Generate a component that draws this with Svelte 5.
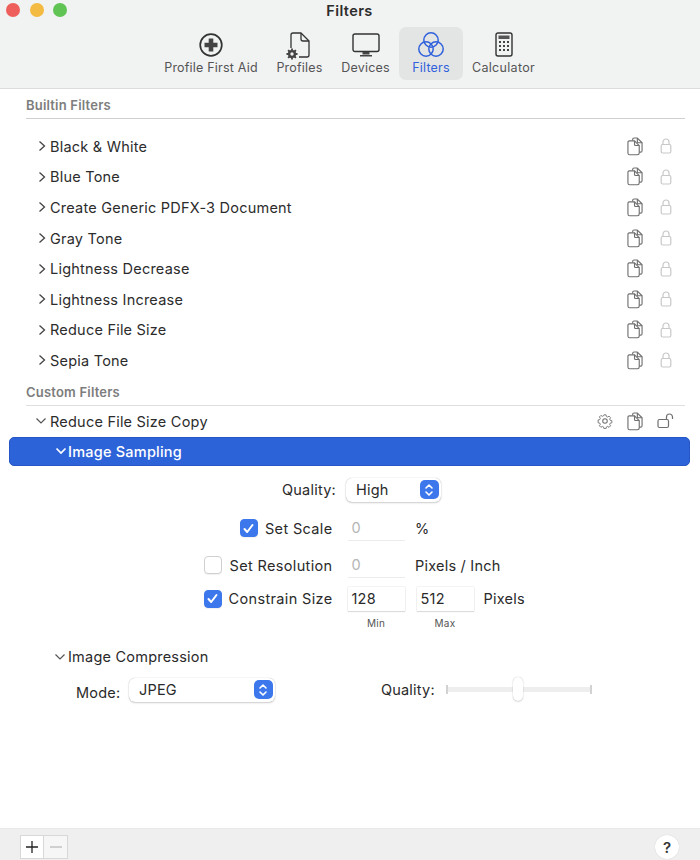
<script>
  const builtin = ['Black & White','Blue Tone','Create Generic PDFX-3 Document','Gray Tone','Lightness Decrease','Lightness Increase','Reduce File Size','Sepia Tone'];
</script>

{#snippet chevronRight()}
  <svg class="chev" width="10" height="12" viewBox="0 0 10 12"><path d="M2.500 1.500 7.500 6 2.500 10.500" fill="none" stroke="#444" stroke-width="1.300"/></svg>
{/snippet}
{#snippet chevronDown(color, w)}
  <svg class="chev" width="12" height="10" viewBox="0 0 12 10"><path d="M1.500 2.500 6 7 10.500 2.500" fill="none" stroke={color} stroke-width={w}/></svg>
{/snippet}
{#snippet copyIcon()}
  <svg width="16" height="19" viewBox="0 0 17 20" fill="none" stroke="#6f6f6f" stroke-width="1.200" stroke-linejoin="round">
    <path d="M6 3.500V2.500a1.500 1.500 0 0 1 1.500-1.500H11l5 5v8.500a1.500 1.500 0 0 1-1.500 1.500H13"/>
    <path d="M11 1v4a1 1 0 0 0 1 1h4" />
    <path d="M2.500 4H8l5 5v8a1.800 1.800 0 0 1-1.800 1.800H2.800A1.800 1.800 0 0 1 1 17V5.500A1.500 1.500 0 0 1 2.500 4Z" fill="#fff"/>
    <path d="M8 4v4a1 1 0 0 0 1 1h4"/>
  </svg>
{/snippet}
{#snippet lockIcon()}
  <svg width="12" height="16" viewBox="0 0 12 16" fill="none" stroke="#c8c8c8" stroke-width="1.200">
    <rect x="1.200" y="6.500" width="9.600" height="8.500" rx="1.500"/>
    <path d="M3 6.500V4a3 3 0 0 1 6 0v2.500"/>
  </svg>
{/snippet}
{#snippet stepper()}
  <span class="stepper">
    <svg width="10" height="14" viewBox="0 0 10 14" fill="none" stroke="#fff" stroke-width="1.600" stroke-linecap="round" stroke-linejoin="round"><path d="M2 5 5 2l3 3M2 9l3 3 3-3"/></svg>
  </span>
{/snippet}
{#snippet check(on)}
  <span class="box" class:on>
    {#if on}<svg width="13" height="13" viewBox="0 0 13 13" fill="none" stroke="#fff" stroke-width="2" stroke-linecap="round" stroke-linejoin="round"><path d="M2.500 7 5.200 10 10.500 3"/></svg>{/if}
  </span>
{/snippet}

<div class="win">
  <header class="toolbar">
    <div class="titlebar">
      <div class="lights"><i class="red"></i><i class="yellow"></i><i class="green"></i></div>
      <div class="title">Filters</div>
    </div>
    <nav class="tools">
      <div class="tool t1">
        <svg width="26" height="26" viewBox="0 0 26 26"><circle cx="13" cy="13" r="10.800" fill="none" stroke="#333" stroke-width="1.700"/><path d="M13 6.500v13M6.500 13h13" stroke="#444" stroke-width="4.600"/></svg>
        <span>Profile First Aid</span>
      </div>
      <div class="tool t2">
        <svg width="26" height="26" viewBox="0 0 26 26" fill="none" stroke="#333" stroke-width="1.300" stroke-linejoin="round">
          <path d="M4 16V3a2 2 0 0 1 2-2h8l8 8v14a2 2 0 0 1-2 2h-8"/>
          <path d="M14 1v6a2 2 0 0 0 2 2h6"/>
          <circle cx="5" cy="22" r="2.900" stroke="#444" stroke-width="2.400"/>
          <path d="M5 16.500v2M5 25.500v2M-.5 22h2M8.500 22h2M1.100 18.100l1.400 1.400M7.500 24.500l1.400 1.400M1.100 25.900l1.400-1.400M7.500 19.500l1.400-1.400" stroke="#444" stroke-width="1.800"/>
        </svg>
        <span>Profiles</span>
      </div>
      <div class="tool t3">
        <svg width="28" height="26" viewBox="0 0 28 26" fill="none">
          <rect x="1" y="2" width="26" height="17.500" rx="2" stroke="#333" stroke-width="1.400"/>
          <path d="M10.500 20v2.500h7V20Z M8 23h12v1.500H8Z" fill="#444"/>
        </svg>
        <span>Devices</span>
      </div>
      <div class="tool t4 active">
        <svg width="26" height="26" viewBox="0 0 26 26" fill="none" stroke="#2f62dc" stroke-width="1.500">
          <circle cx="13" cy="8" r="7.200"/><circle cx="8" cy="17" r="7.200"/><circle cx="18" cy="17" r="7.200"/>
        </svg>
        <span>Filters</span>
      </div>
      <div class="tool t5">
        <svg width="26" height="26" viewBox="0 0 26 26" fill="none">
          <rect x="5" y="1" width="16" height="23" rx="2" stroke="#333" stroke-width="1.400"/>
          <rect x="7.500" y="3.500" width="11" height="3.500" fill="#555"/>
          <path d="M8 10h2M12 10h2M16 10h2M8 14h2M12 14h2M16 14h2M8 18h2M12 18h2M16 18h2" stroke="#444" stroke-width="2"/>
        </svg>
        <span>Calculator</span>
      </div>
    </nav>
  </header>

  <main class="content">
    <div class="section first">Builtin Filters</div>
    <ul class="list">
      {#each builtin as name}
        <li class="row">
          {@render chevronRight()}
          <span class="name">{name}</span>
          <span class="acts">{@render copyIcon()}{@render lockIcon()}</span>
        </li>
      {/each}
    </ul>

    <div class="section second">Custom Filters</div>
    <div class="row custom">
      {@render chevronDown('#555', 1.2)}
      <span class="name">Reduce File Size Copy</span>
      <span class="acts">
        <svg class="gear" width="16" height="16" viewBox="0 0 17 17" fill="none" stroke="#6f6f6f" stroke-width="1.100" stroke-linejoin="round">
          <path d="M7.200 1h2.600l.4 2 1.500.7 1.800-1.100 1.800 1.800-1.100 1.800.7 1.500 2 .4v2.600l-2 .4-.7 1.500 1.100 1.800-1.800 1.800-1.800-1.100-1.500.7-.4 2H7.200l-.4-2-1.500-.7-1.800 1.100-1.800-1.800 1.100-1.800-.7-1.500-2-.4V7.200l2-.4.7-1.500-1.100-1.800 1.800-1.800 1.800 1.100 1.500-.7Z" transform="translate(1.100 1.100) scale(.87)"/>
          <circle cx="8.500" cy="8.500" r="2.400"/>
        </svg>
        {@render copyIcon()}
        <svg class="unlock" width="17" height="16" viewBox="0 0 17 16" fill="none" stroke="#6f6f6f" stroke-width="1.200">
          <rect x="1" y="6.500" width="10.500" height="8" rx="1.500"/>
          <path d="M9.500 6.500V4a3 3 0 0 1 6 0v2"/>
        </svg>
      </span>
    </div>
    <div class="selected">
      {@render chevronDown('#fff', 1.7)}
      <span>Image Sampling</span>
    </div>

    <div class="quality"><label for="q">Quality:</label>
      <div id="q" class="popup high"><span>High</span>{@render stepper()}</div>
    </div>

    <div class="fields">
      <div class="flabel">{@render check(true)}<span>Set Scale</span></div>
      <div class="field off">0</div><div class="unit">%</div>

      <div class="flabel">{@render check(false)}<span>Set Resolution</span></div>
      <div class="field off">0</div><div class="unit">Pixels / Inch</div>

      <div class="flabel">{@render check(true)}<span>Constrain Size</span></div>
      <div class="pair">
        <div class="field">128<small>Min</small></div>
        <div class="field">512<small>Max</small></div>
        <div class="unit">Pixels</div>
      </div>
    </div>

    <div class="sub">{@render chevronDown('#555', 1.2)}<span>Image Compression</span></div>
    <div class="compress">
      <div class="mode"><span class="modelabel">Mode:</span>
        <div class="popup jpeg"><span>JPEG</span>{@render stepper()}</div>
      </div>
      <div class="qslider"><span>Quality:</span>
        <div class="slider"><i class="thumb"></i></div>
      </div>
    </div>
  </main>

  <footer class="bottom">
    <div class="pm"><span class="plus">
      <svg width="14" height="14" viewBox="0 0 14 14"><path d="M7 1v12M1 7h12" stroke="#222" stroke-width="1.300"/></svg></span><span class="minus">
      <svg width="14" height="14" viewBox="0 0 14 14"><path d="M1 7h12" stroke="#bbb" stroke-width="1.300"/></svg></span></div>
    <div class="help">?</div>
  </footer>
</div>

<style>
  :global(body) { margin: 0; background: #fff; }
  .win {
    width: 700px; height: 860px; display: flex; flex-direction: column;
    font-family: Inter, "Liberation Sans", sans-serif; color: #2a2a2a; font-size: 14.500px; letter-spacing: .22px;
    overflow: hidden; background: #fff;
  }
  .toolbar { height: 88px; background: #f1f2f2; border-bottom: 1px solid #dcdcdc; flex: none; }
  .titlebar { height: 27px; position: relative; display: flex; align-items: center; justify-content: center; }
  .title { font-weight: 600; font-size: 14.500px; letter-spacing: .4px; color: #2c2c2c; margin-top: -7px; margin-left: -1px; }
  .lights { position: absolute; left: 6px; top: 3px; display: flex; gap: 9.500px; }
  .lights i { width: 14px; height: 14px; border-radius: 50%; display: block; }
  .red { background: #ee5f5b; } .yellow { background: #f4bb43; } .green { background: #5fc454; }
  .tools { display: flex; justify-content: center; height: 53px; margin-left: -1px; }
  .tool { display: flex; flex-direction: column; align-items: center; padding-top: 5px; box-sizing: border-box; border-radius: 7px; color: #555; font-size: 12.500px; letter-spacing: .2px; white-space: nowrap; }
  .tool svg { overflow: visible; }
  .tool span { margin-top: 2px; line-height: 16px; }
  .t1 { width: 112px; } .t2 { width: 65px; } .t3 { width: 67px; } .t4 { width: 64px; } .t5 { width: 81px; }
  .t5 span { letter-spacing: .3px; }
  .active { background: #e3e4e4; color: #2f62dc; }

  .content { flex: 1; padding: 0 9px; position: relative; }
  .section { margin-left: 17px; margin-right: 6px; font-size: 13px; letter-spacing: .2px; font-weight: 600; color: #7d7d7d; height: 20px; line-height: 20px; border-bottom: 1px solid #dfdfdf; padding-bottom: 3px; box-sizing: content-box; }
  .first { margin-top: 6px; border-bottom-color: #cfcfcf; }
  .second { margin-top: 6px; }
  .list { list-style: none; margin: 12px 0 0; padding: 0; }
  .row { height: 30.600px; display: flex; align-items: center; padding-left: 28px; color: #2c2c2c; }
  .chev { flex: none; }
  .name { margin-left: 3px; }
  .acts { margin-left: auto; margin-right: 19.500px; display: flex; align-items: center; gap: 16.500px; }
  .custom { padding-left: 26px; height: 31px; }
  .custom .acts { margin-right: 17px; gap: 14px; }
  .selected { height: 29px; margin-right: 1px; background: #2d63d9; color: #fff; border-radius: 5px; display: flex; align-items: center; padding-left: 45px; font-weight: 500; border: 1px solid #2556c3; box-sizing: border-box; }
  .selected span { margin-left: 1px; }

  .quality { display: flex; align-items: center; margin-top: 10px; padding-left: 273px; height: 28px; }
  .quality label { margin-right: 10px; }
  .popup { background: #fff; border-radius: 6px; box-shadow: 0 0 1px rgba(0,0,0,.3), 0 1px 2px rgba(0,0,0,.18); display: flex; align-items: center; justify-content: space-between; height: 24px; padding: 0 2px 0 10px; box-sizing: border-box; }
  .high { width: 95px; }
  .jpeg { width: 146px; }
  .stepper { width: 19px; height: 19px; background: #3c78ec; border-radius: 5px; display: flex; align-items: center; justify-content: center; }

  .fields { display: grid; grid-template-columns: 329px 68px 1fr; grid-template-rows: 37px 37px 30px; margin-top: 6px; align-items: center; }
  .flabel { display: flex; align-items: center; justify-content: flex-end; gap: 7px; height: 25px; padding-right: 5.500px; letter-spacing: .35px; }
  .box { width: 16px; height: 16px; border-radius: 4px; border: 1px solid #d0d0d0; background: #fff; display: flex; align-items: center; justify-content: center; box-shadow: 0 1px 1px rgba(0,0,0,.06); }
  .box.on { background: #3c78ec; border-color: #3c78ec; }
  .field { width: 57px; height: 24px; line-height: 24px; padding-left: 4px; box-sizing: border-box; background: #fff; box-shadow: 0 0 1px rgba(0,0,0,.25), 0 1px 1px rgba(0,0,0,.1); position: relative; margin-left: 9.500px; }
  .field.off { color: #b5b5b5; box-shadow: 0 1px 0 #ececec; }
  .unit { margin-left: 9px; white-space: nowrap; }
  .pair { grid-column: 2 / 4; display: flex; align-items: center; }
  .pair .field + .field { margin-left: 12px; }
  .pair .unit { margin-left: 10px; }
  .field small { position: absolute; left: 0; right: 0; top: 29px; text-align: center; font-size: 10px; line-height: 14px; color: #555; }

  .sub { display: flex; align-items: center; margin-top: 31px; padding-left: 45px; height: 24px; gap: 2px; }
  .compress { display: flex; margin-top: 9px; align-items: center; }
  .mode { display: flex; align-items: center; gap: 8.500px; margin-left: 67px; }
  .modelabel { margin-top: 5px; }
  .qslider { display: flex; align-items: center; gap: 11px; margin-left: 106px; }
  .slider { width: 146px; height: 5px; background: #eeeeee; position: relative; }
  .slider::before, .slider::after { content: ""; position: absolute; top: -2px; width: 2px; height: 9px; background: #d2d2d2; }
  .slider::before { left: 0; }
  .slider::after { right: 0; }
  .thumb { position: absolute; left: 67px; top: -10px; width: 10px; height: 24px; background: #fff; border-radius: 5px; box-shadow: 0 0 1px rgba(0,0,0,.3), 0 1px 2px rgba(0,0,0,.12); }

  .bottom { height: 32px; flex: none; background: #efefef; border-top: 1px solid #e9e9e9; box-sizing: border-box; display: flex; align-items: flex-start; justify-content: space-between; padding: 6px 21px 0 20px; }
  .pm { display: flex; }
  .pm span { width: 24px; height: 24px; box-sizing: border-box; border: 1px solid #d8d8d8; display: flex; align-items: center; justify-content: center; }
  .plus { background: #fff; border-color: #cfcfcf; }
  .pm .minus { background: #f6f6f6; border-left: none; }
  .help { width: 24px; height: 24px; border-radius: 50%; background: #fff; display: flex; align-items: center; justify-content: center; font-weight: 600; font-size: 15px; letter-spacing: 0; color: #333; box-shadow: 0 0 1px rgba(0,0,0,.2); }
</style>
